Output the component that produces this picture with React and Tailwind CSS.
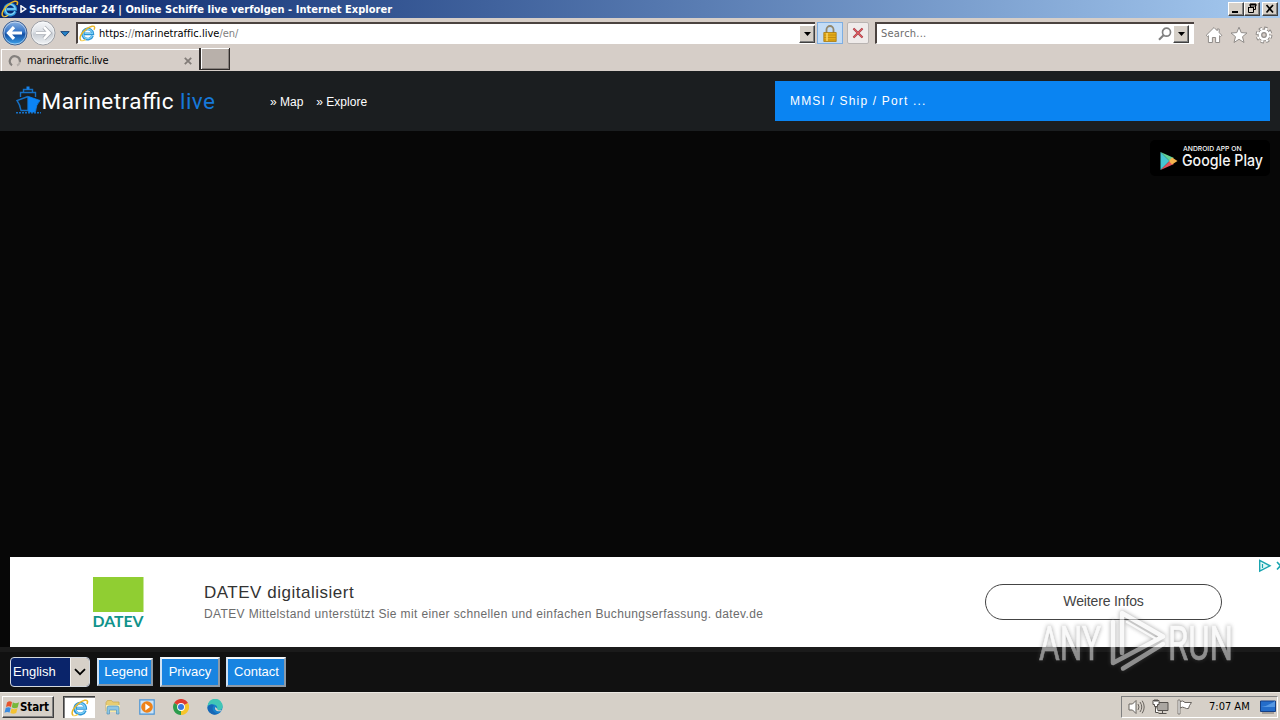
import React from "react";

const tahoma = "font-['DejaVu_Sans_Condensed','DejaVu_Sans',sans-serif] [font-stretch:condensed]";
const raised = "border border-t-white border-l-white border-r-[#404040] border-b-[#404040] bg-[#d6d0c8] shadow-[inset_-1px_-1px_0_#808080]";

function IeLogo({ className }) {
  return (
    <svg viewBox="0 0 18 18" className={className} fill="none">
      <path d="M14.3 11.4A5.4 5.4 0 1 1 14.6 9.300H5" stroke="#2a93d6" strokeWidth="2.900" />
      <path d="M14 11.2A5 5 0 1 1 14.3 9H6" stroke="#7dd0f6" strokeWidth="1.300" />
      <path d="M2.2 16.4C-.8 13.8 3 7.5 8.4 3.9 12.5 1 16 .4 16.5 2.2c.2.8-.1 1.8-.6 2.8" stroke="#e9b526" strokeWidth="1.5" />
      <path d="M2.2 16.4c1.2.8 3.2 0 5-1.1" stroke="#f3cf53" strokeWidth="1.2" />
    </svg>
  );
}

function Arrow({ left, cls }) {
  const id = left ? "navBack" : "navNext";
  return (
    <svg viewBox="0 0 26 26" className={cls}>
      <defs>
        <linearGradient id={id} x1="0" y1="0" x2="0" y2="1">
          <stop offset="0" stopColor={left ? "#8eb4e4" : "#f6f7f9"} />
          <stop offset=".45" stopColor={left ? "#3474c7" : "#dde1e6"} />
          <stop offset=".55" stopColor={left ? "#1450a4" : "#c9ced5"} />
          <stop offset="1" stopColor={left ? "#3fa6ee" : "#f3f6f8"} />
        </linearGradient>
      </defs>
      <circle cx="13" cy="13" r="12" fill={`url(#${id})`} stroke={left ? "#42608f" : "#9a9da3"} />
      <circle cx="13" cy="13" r="11" fill="none" stroke="#fff" strokeOpacity=".5" />
      <path d={left ? "M20 13H7M12 7.2L6.5 13l5.5 5.8" : "M6 13h13M14 7.2l5.500 5.800-5.500 5.800"} fill="none" stroke={left ? "#fff" : "#a9adb4"} strokeWidth={left ? 3.2 : 4.2} />
      {!left && <path d="M6 13h13M14 7.200l5.500 5.800-5.500 5.800" fill="none" stroke="#fff" strokeWidth="2.600" />}
    </svg>
  );
}

function DropButton() {
  return (
    <div className={`${raised} flex h-[18px] w-4 shrink-0 items-center justify-center`}>
      <svg viewBox="0 0 7 4" className="h-1 w-[7px]"><path d="M0 0h7L3.500 4z" fill="#000" /></svg>
    </div>
  );
}

function TitleBar() {
  return (
    <div className="flex h-[18px] items-center bg-linear-to-r from-[#0a246a] to-[#a6caf0] text-white">
      <IeLogo className="ml-px size-[18px]" />
      <svg viewBox="0 0 7 8" className="ml-px h-2 w-[7px]"><path d="M1 .8L5.800 4 1 7.200z" fill="none" stroke="#fff" strokeWidth="1.500" /></svg>
      <span className={`${tahoma} ml-[2px] pt-px text-[11px] leading-[18px] font-bold tracking-[0.03px] whitespace-pre`}>Schiffsradar 24 | Online Schiffe live verfolgen - Internet Explorer</span>
      <div className="mr-[2px] ml-auto flex">
        <div className={`${raised} h-[14px] w-4`}>
          <svg viewBox="0 0 14 12" className="h-3 w-[14px]"><path d="M3 8h6v2H3z" /></svg>
        </div>
        <div className={`${raised} h-[14px] w-4`}>
          <svg viewBox="0 0 14 12" className="h-3 w-[14px]" fill="none" stroke="#000"><path d="M5 1h6v2H5zM5.500 4V1.500h5v5H9M3 4.500h5.500M3.500 4v5.500h5V4" /></svg>
        </div>
        <div className={`${raised} ml-[2px] h-[14px] w-4`}>
          <svg viewBox="0 0 14 12" className="h-3 w-[14px]"><path d="M3.500 2l6.500 7.500M10 2L3.500 9.500" stroke="#000" strokeWidth="1.700" /></svg>
        </div>
      </div>
    </div>
  );
}

function Toolbar() {
  return (
    <div className="flex h-[30px] items-center bg-[#d6cec8]">
      <Arrow left cls="ml-[2px] size-[26px]" />
      <Arrow cls="ml-[2px] size-[26px]" />
      <svg viewBox="0 0 10 6" className="mt-px ml-[4px] h-[6px] w-[10px]"><path d="M.8.600h8.400L5 5.200z" fill="#2583c9" stroke="#153d70" strokeWidth=".9" /></svg>
      <div className="ml-[6px] flex h-[22px] w-[739px] items-center border-t-2 border-l-2 border-b border-t-[#4b4340] border-l-[#4b4340] border-b-white bg-white pl-px">
        <IeLogo className="size-[17px]" />
        <div className={`${tahoma} ml-[3px] flex-1 pt-px text-[11px] tracking-[0.01px] text-black`}>https:<span className="text-[#808080]">//</span>marinetraffic.live<span className="text-[#808080]">/en/</span></div>
        <DropButton />
      </div>
      <div className="ml-[2px] flex h-[22px] w-[26px] items-center justify-center border border-[#7eaee2] bg-[#c3dcf6]">
        <svg viewBox="0 0 14 17" className="h-[17px] w-[14px]">
          <path d="M3.500 8V4.500a3.500 3.500 0 0 1 7 0V8" fill="none" stroke="#92876c" strokeWidth="1.800" />
          <path d="M.8 7.500h12.400v9H.8z" fill="#e5ad19" stroke="#a8780e" strokeWidth=".8" />
          <path d="M1 10h12M1 12.500h12M1 15h12" stroke="#bd850e" strokeWidth=".8" />
          <path d="M4 8v8" stroke="#f8d76a" strokeWidth="1.500" />
        </svg>
      </div>
      <div className="ml-[4px] flex h-[22px] w-[22px] items-center justify-center rounded-[2px] border border-[#b9b4b2] bg-[#efebea]">
        <svg viewBox="0 0 12 12" className="size-3"><path d="M1.500 1.500l9 9M10.500 1.500l-9 9" stroke="#8a4348" strokeWidth="2.200" /><path d="M1.500 1.500l9 9M10.500 1.500l-9 9" stroke="#e05960" strokeWidth="1.400" /></svg>
      </div>
      <div className="ml-[6px] flex h-[22px] w-[319px] items-center border-t-2 border-l-2 border-b border-t-[#4b4340] border-l-[#4b4340] border-b-white bg-white pr-[5px] pl-1">
        <div className={`${tahoma} flex-1 pt-px text-[11px] tracking-[0.22px] text-[#6d6d6d]`}>Search...</div>
        <svg viewBox="0 0 14 14" className="mr-px size-[14px]" fill="none" stroke="#808080"><circle cx="8.500" cy="5.200" r="4" strokeWidth="1.700" /><path d="M5.500 8.200L1 12.700" strokeWidth="2.200" /></svg>
        <DropButton />
      </div>
      <div className="mt-1 ml-[11px] flex items-center gap-[7px]">
        <svg viewBox="0 0 18 18" className="size-[18px]" fill="#fff" stroke="#908c89" strokeWidth="1"><path d="M9 1.500L1.200 9.300l1.300 1.200.9-.8v6.800h4v-5h3.200v5h4V9.700l.9.800 1.300-1.200-2.600-2.600V3h-2v1.700z" /></svg>
        <svg viewBox="0 0 18 18" className="size-[18px]" fill="#fff" stroke="#908c89" strokeWidth="1"><path d="M9 1.200l2.200 5.400 5.800.4-4.500 3.700 1.500 5.800L9 13.300l-5 3.200 1.500-5.800L1 7l5.800-.4z" /></svg>
        <svg viewBox="0 0 18 18" className="size-[18px]">
          <circle cx="9" cy="9" r="6.900" fill="none" stroke="#908c89" strokeWidth="3" strokeDasharray="3.220 2.200" />
          <circle cx="9" cy="9" r="5.900" fill="#fff" stroke="#908c89" />
          <circle cx="9" cy="9" r="6.400" fill="none" stroke="#fff" strokeWidth="2" strokeDasharray="2.200 2.827" strokeDashoffset="-.4" />
          <circle cx="9" cy="9" r="2.300" fill="#d6cec8" stroke="#908c89" strokeWidth="1.200" />
        </svg>
      </div>
    </div>
  );
}

function TabRow() {
  return (
    <div className="flex h-[23px] bg-[#d6cec8]">
      <div className="mt-px ml-px flex h-[22px] w-[198px] items-center border-t border-l border-white">
        <svg viewBox="0 0 14 14" className="ml-[6px] size-[14px]" fill="none"><path d="M4 11.300A5 5 0 1 1 11.800 8" stroke="#84807d" strokeWidth="2.200" /><path d="M11.800 8A5 5 0 0 1 9 11.500" stroke="#b5afaa" strokeWidth="2" /></svg>
        <span className={`${tahoma} ml-[5px] pt-px text-[11px] tracking-[-0.180px]`}>marinetraffic.live</span>
        <svg viewBox="0 0 8 8" className="mr-[7px] ml-auto size-[8px]"><path d="M.8.800l6.400 6.400M7.200.800L.8 7.200" stroke="#827c78" strokeWidth="1.800" /></svg>
      </div>
      <div className="h-[22px] w-[31px] border-r border-b border-l-2 border-[#302c2a] bg-[#b8b0aa] shadow-[inset_1px_1px_0_#fff,inset_-1px_-1px_0_#86807c]" />
    </div>
  );
}

function ShipLogo() {
  return (
    <svg viewBox="0 0 202 32" className="h-8 w-[202px]" fill="none">
      <g stroke="#1670c4" strokeWidth="1.400">
        <path d="M8.500 7V4.500h9V7M5.500 12V7.500h15V12M13 2v3" />
        <path d="M13 11.500L2 15.500q3 4 4 10h7M13 11.500v14" />
        <path d="M13.500 11.500L25 15.500q-4 4-4.500 11-3 1.500-7 0z" fill="#0b84f5" stroke="#0b84f5" strokeWidth=".8" />
        <path d="M1 27.800h25" strokeDasharray="2 1" strokeWidth="1.500" />
      </g>
      <path d="M11.500 1.500h3v3h-3z" fill="#1684ee" />
      <text x="26.500" y="24" fill="#fff" fontFamily="Roboto, sans-serif" fontSize="22.500" textLength="132" lengthAdjust="spacing">Marinetraffic</text>
      <text x="165" y="24" fill="#1678d8" fontFamily="Roboto, sans-serif" fontSize="22.500" textLength="35" lengthAdjust="spacing">live</text>
    </svg>
  );
}

function SiteHeader() {
  return (
    <div className="flex h-[60px] items-center bg-[#1b1e20] font-['Liberation_Sans',sans-serif]">
      <div className="ml-[15px]"><ShipLogo /></div>
      <nav className="mt-px ml-[53px] flex gap-[13px] text-[12px] text-white">
        <a>» Map</a>
        <a>» Explore</a>
      </nav>
      <div className="mr-[10px] ml-auto flex h-10 w-[495px] items-center bg-[#0a84f2] pl-[15px] text-[12px] tracking-[1.170px] text-white">MMSI / Ship / Port ...</div>
    </div>
  );
}

function PlayBadge() {
  return (
    <svg viewBox="0 0 120 36" className="h-9 w-[120px]">
      <rect width="120" height="36" rx="5" fill="#000" />
      <path d="M10.500 12v18l9-9z" fill="#45c6d4" />
      <path d="M10.500 12l13.500 6-4.500 3z" fill="#64d394" />
      <path d="M10.500 30l13.500-6-4.500-3z" fill="#e2525c" />
      <path d="M22 17.500l5.500 3.500-5.500 3.500-3-3.500z" fill="#f4b34d" />
      <text x="33" y="10.500" fill="#fff" fontFamily="Inter, sans-serif" fontWeight="500" fontSize="6.500" textLength="58.500" lengthAdjust="spacingAndGlyphs">ANDROID APP ON</text>
      <text x="32" y="26.200" fill="#f4f4f4" fontFamily="Inter, sans-serif" fontWeight="500" fontSize="16" textLength="81" lengthAdjust="spacingAndGlyphs">Google Play</text>
    </svg>
  );
}

function AdBanner() {
  return (
    <div className="relative ml-[10px] flex h-[90px] items-center bg-white font-['Liberation_Sans',sans-serif]">
      <svg viewBox="0 0 54 54" className="ml-[82px] h-[54px] w-[54px]">
        <path d="M1 2h50.500v35H1z" fill="#90ce32" />
        <text x="0.500" y="51.500" fill="#10938b" fontFamily="Lato, sans-serif" fontWeight="700" fontSize="16" textLength="51" lengthAdjust="spacingAndGlyphs">DATEV</text>
      </svg>
      <div className="mt-[2px] ml-[58px] flex flex-col whitespace-nowrap">
        <span className="text-[17px] leading-[22px] tracking-[0.510px] text-[#333]">DATEV digitalisiert</span>
        <span className="text-[12px] leading-[20px] tracking-[0.374px] text-[#6c6c6c]">DATEV Mittelstand unterstützt Sie mit einer schnellen und einfachen Buchungserfassung. datev.de</span>
      </div>
      <div className="mr-[58px] ml-auto flex h-9 w-[237px] items-center justify-center rounded-full border border-[#444] pb-px text-[14px] tracking-[-0.150px] text-[#444]">Weitere Infos</div>
      <svg viewBox="0 0 22 14" className="absolute top-[2px] right-0 h-[14px] w-[22px]" fill="none" stroke="#1aa5b0"><path d="M1.700 1.500v10.500L12 6.800z" fill="#e2f8f8" strokeWidth="1.400" /><path d="M4.500 5v4" strokeWidth="1.200" /><path d="M19 3l7 7.500M19 10.500l7-7.500" strokeWidth="1.600" /></svg>
    </div>
  );
}

function PageFooter() {
  const button = "flex items-center justify-center border-2 border-t-[#f4f7fa] border-l-[#d0e2f3] border-r-[#8e9aa6] border-b-[#8e9aa6] bg-[#1884e1]";
  return (
    <div className="h-[45px] border-t-[5px] border-[#1b1b1b] bg-[#111] font-['Liberation_Sans',sans-serif] text-[13px] text-white">
      <div className="ml-[10px] flex pt-[5px]">
        <div className="flex h-[30px] w-20 overflow-hidden rounded-[4px] border border-[#d3d8de] bg-[#0a246a]">
          <span className="flex-1 pl-[2px] leading-7">English</span>
          <div className="flex w-[19px] items-center justify-center border-l border-[#f4f2ef] bg-[#d6d0c8]">
            <svg viewBox="0 0 12 8" className="h-2 w-3"><path d="M1 1.200l5 5 5-5" fill="none" stroke="#000" strokeWidth="1.800" /></svg>
          </div>
        </div>
        <div className={`${button} mt-px ml-[7px] h-7 w-14 pl-[2px]`}>Legend</div>
        <div className={`${button} ml-[7px] h-[30px] w-[60px]`}>Privacy</div>
        <div className={`${button} ml-[6px] h-[30px] w-[60px] pl-px`}>Contact</div>
      </div>
    </div>
  );
}

function Taskbar() {
  return (
    <div className="flex h-7 items-center border-t border-[#eae7e2] bg-[#d6d0c8] pt-px">
      <div className={`${raised} ml-[2px] flex h-[22px] w-[52px] items-center`}>
        <svg viewBox="0 0 16 15" className="ml-px h-[15px] w-4">
          <path d="M3 2.500Q5.500.500 8 2L7 7Q4.500 5.500 2 7z" fill="#e6542c" />
          <path d="M8.800 2.300Q11.500 4 15 2.300L13.700 7.400Q10.500 9 7.800 7.300z" fill="#76b83b" />
          <path d="M1.800 7.800Q4.500 6.500 6.800 7.800L5.600 12.500Q3 11.300.5 12.700z" fill="#3a8be0" />
          <path d="M7.600 8.200Q10 10 13.500 8.300L12.200 13Q9 14.500 6.400 12.900z" fill="#f4c232" />
        </svg>
        <span className={`${tahoma} pt-px text-[11.500px] font-bold tracking-[-0.100px]`}>Start</span>
      </div>
      <div className="ml-[9px] flex h-[22px] w-8 items-center justify-center border-t border-l border-[#404040] bg-white shadow-[inset_1px_1px_0_#808080]"><IeLogo className="size-[18px]" /></div>
      <svg viewBox="0 0 18 16" className="ml-[9px] h-4 w-[18px]">
        <path d="M2 3.500L3.500 1.500h4l1.300 1.500H15v9H2z" fill="#e8cd72" stroke="#c5a84d" strokeWidth=".7" />
        <path d="M2 6h14v7H2z" fill="#f9e9a6" />
        <path d="M3 15V9q0-2 2-2h8q2 0 2 2v6h-2.500v-4h-7v4z" fill="#8ec6e5" stroke="#5293ba" strokeWidth=".7" />
      </svg>
      <svg viewBox="0 0 16 16" className="ml-[17px] size-4">
        <path d="M.8.800h14.400v14.400H.8z" fill="#cce3f7" stroke="#4b94d5" strokeWidth="1.200" />
        <circle cx="8" cy="8" r="5.800" fill="#ee8219" /><path d="M6.300 4.500v7l4.800-3.500z" fill="#fff" />
      </svg>
      <svg viewBox="0 0 16 16" className="ml-[18px] size-4">
        <path d="M8 8L1.100 4A8 8 0 0 1 15 4z" fill="#df3c30" />
        <path d="M8 8h0L15 4A8 8 0 0 1 8 16z" fill="#f7c52b" />
        <path d="M8 8v8A8 8 0 0 1 1.100 4z" fill="#2c9c4d" />
        <circle cx="8" cy="8" r="3.900" fill="#fff" /><circle cx="8" cy="8" r="3" fill="#3978df" />
      </svg>
      <svg viewBox="0 0 16 16" className="ml-[18px] size-4">
        <circle cx="8" cy="8" r="7.600" fill="#1680cc" />
        <path d="M.6 7A7.500 7.500 0 0 1 15.600 7.500c0 2.600-2 4-4.300 3.700-2-.3-1.500-1.200-1.100-2C10.800 6 5 3.500.6 7z" fill="#40c6b6" />
        <path d="M.5 8.500C2 5 5.500 5 7 6.500 4 9 6 14.500 12 14.300 6 18 .2 13.500.5 8.500z" fill="#1767b6" />
        <path d="M8.500 8c-1.500 2 .7 5 5.300 4.200l1.300-1.400c-2 .8-5 .9-4.700-.7z" fill="#d6d0c8" />
      </svg>
      <div className="mr-[2px] ml-auto flex h-[22px] w-[157px] items-center border border-t-[#808080] border-l-[#808080] border-r-white border-b-white">
        <svg viewBox="0 0 17 16" className="ml-[6px] h-4 w-[17px]" stroke="#69645f" fill="none"><path d="M1 5h3.500L8 1.500v13L4.500 11H1z" fill="#fff" /><path d="M10 5q2 3 0 6M12 3q3.500 5 0 10M14.200 1.700q4 6.300 0 12.600" /></svg>
        <svg viewBox="0 0 17 16" className="ml-[7px] h-4 w-[17px]" stroke="#55514d"><path d="M5 3.500h11v8H5z" fill="#aaa6a1" /><path d="M6.500 14.500h8M10.500 11.500v3" fill="none" /><path d="M1 1.500h6v4H5.500v2h-3v-2H1zM3 0v3M5 0v3M3.500 7.500v6h3" fill="#fff" /></svg>
        <svg viewBox="0 0 16 16" className="ml-[8px] size-4" stroke="#69645f"><path d="M3 2.500Q6 1 8 3.500h6.500L12.500 6.500l-1 3q-2 .5-4-.8T3 9z" fill="#fff" /><path d="M1 1h2v14H1z" fill="#fff" strokeWidth=".8" /></svg>
        <span className={`${tahoma} ml-[16px] pt-px text-[11px] tracking-[0px] whitespace-nowrap`}>7:07 AM</span>
        <svg viewBox="0 0 16 14" className="mr-px ml-auto h-[14px] w-4"><path d="M.5 1h15v10.500H.5z" fill="#246dca" stroke="#153f85" /><path d="M1 7q7-1 14-6v6z" fill="#5598e3" /><path d="M2 13h12" stroke="#77716d" /></svg>
      </div>
    </div>
  );
}

function Watermark() {
  return (
    <svg viewBox="0 0 204 72" className="pointer-events-none absolute top-[605px] left-[1034px] h-[72px] w-[204px] opacity-55 [filter:drop-shadow(0_0_2px_#555)]">
      <g fill="#f5f5f5" stroke="#f5f5f5" strokeWidth=".7" fontFamily="Roboto, sans-serif" fontSize="48.500">
        <text x="5" y="54.500" textLength="62" lengthAdjust="spacingAndGlyphs">ANY</text>
        <text x="134" y="54.500" textLength="65" lengthAdjust="spacingAndGlyphs">RUN</text>
      </g>
      <g fill="none" stroke="#f5f5f5" strokeWidth="4.500" strokeLinecap="round" strokeLinejoin="round">
        <path d="M79 17v41l50-26.500L88 8v40" />
        <path d="M89 63.500L129 39" />
        <path d="M93 17l31 18" strokeWidth="2.500" />
      </g>
    </svg>
  );
}

export default function App() {
  return (
    <div className="relative flex h-[720px] w-[1280px] flex-col overflow-hidden bg-[#070707]">
      <TitleBar />
      <Toolbar />
      <TabRow />
      <SiteHeader />
      <main className="flex h-[426px] flex-col bg-[#070707]">
        <div className="flex justify-end pt-[9px] pr-[10px]"><PlayBadge /></div>
      </main>
      <AdBanner />
      <PageFooter />
      <Taskbar />
      <Watermark />
    </div>
  );
}
